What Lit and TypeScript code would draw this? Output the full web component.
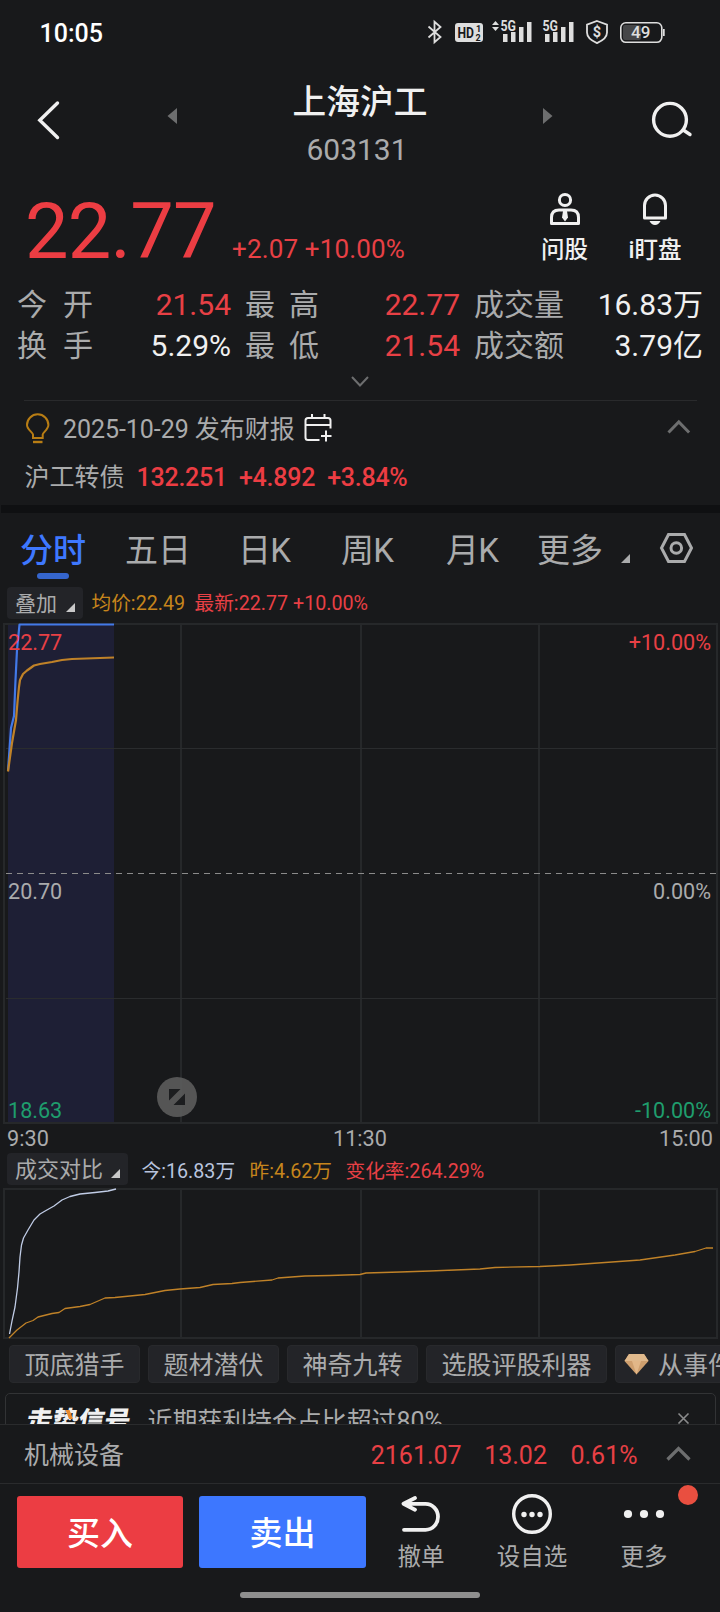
import { LitElement, html, svg, css } from "lit";
import { customElement } from "lit/decorators.js";

const base = css`
  * { box-sizing: border-box; }
  :host {
    display: block;
    font-family: Roboto, "Noto Sans CJK SC", sans-serif;
    color: #aaabac;
    white-space: nowrap;
  }
  svg { display: block; flex: none; overflow: visible; }
  .red { color: #e84045; }
  .green { color: #1f9d6d; }
  .orange { color: #c6851c; }
  .white { color: #f0f0f0; }
  .row { display: flex; align-items: center; }
`;

@customElement("status-bar")
class StatusBar extends LitElement {
  static styles = [base, css`
    .bar { height: 64px; padding: 0 55px 0 39.500px; justify-content: space-between; }
    .time { font-size: 25px; font-weight: 500; color: #fff; line-height: 62px; padding-top: 3px; }
    .g { font: 700 14px Roboto, sans-serif; fill: #dedede; }
    .hd { font: 700 15px Roboto, sans-serif; fill: #18191b; }
    .n { font: 700 9px Roboto, sans-serif; fill: #18191b; }
    .usd { font: 700 14.500px Roboto, sans-serif; fill: #dedede; text-anchor: middle; }
    .bat { font: 500 17px Roboto, sans-serif; fill: #dedede; }
  `];
  bars(x: number) {
    return svg`<path fill="#dedede" d="M${x} 34h4.5v8h-4.5z M${x + 8} 32h4.5v10h-4.5z M${x + 16} 27h4.5v15h-4.5z M${x + 24} 22h4.5v20h-4.5z"/>`;
  }
  render() {
    return html`
      <div class="bar row">
        <span class="time">10:05</span>
        <svg width="241" height="32" viewBox="425 16 241 32">
          <path d="M429.500 26.500l12 10.500-6 5.200V21.800l6 5.200-12 10.500" fill="none" stroke="#dedede" stroke-width="1.800"/>
          <rect x="456" y="23" width="28" height="19" rx="3" fill="#dedede"/>
          <text class="hd" x="458.500" y="38.200" textLength="16.500" lengthAdjust="spacingAndGlyphs">HD</text>
          <text class="n" x="477" y="31.800">1</text>
          <text class="n" x="476.500" y="41">2</text>
          <path fill="#dedede" d="M493 25h7l-3.500-4z M493 27h7l-3.500 4z"/>
          <text class="g" x="501.500" y="31" textLength="15.500" lengthAdjust="spacingAndGlyphs">5G</text>
          ${this.bars(504)}
          <text class="g" x="543.500" y="31" textLength="15.500" lengthAdjust="spacingAndGlyphs">5G</text>
          ${this.bars(546)}
          <path d="M598 21l10 3.600v8c0 5-4 8-10 10.500c-6-2.500-10-5.500-10-10.500v-8z" fill="none" stroke="#dedede" stroke-width="1.800"/>
          <text class="usd" x="598" y="37.300">$</text>
          <rect x="621.800" y="22.800" width="41" height="19.500" rx="5" fill="none" stroke="#dedede" stroke-width="1.600"/>
          <rect x="624" y="25" width="18" height="15" rx="2" fill="#454648"/>
          <rect x="664" y="29" width="1.700" height="7" fill="#dedede"/>
          <text class="bat" x="632" y="38.300">49</text>
        </svg>
      </div>`;
  }
}

@customElement("stock-header")
class StockHeader extends LitElement {
  static styles = [base, css`
    .head { height: 116px; padding: 0 28px 0 37px; display: grid; grid-template-columns: 130px 10px 1fr 108px 41px; align-items: center; }
    .name { display: flex; flex-direction: column; align-items: center; padding-top: 17px; height: 116px; }
    .title { font-size: 33.700px; line-height: 44px; font-weight: 500; color: #f0f0f0; }
    .code { font-size: 30px; line-height: 42px; margin-top: 4px; padding-right: 6px; }
  `];
  render() {
    return html`
      <div class="head">
        <svg width="24" height="40" viewBox="37 102 24 40"><path d="M57.500 103L39.800 120.300L57.500 137.500" fill="none" stroke="#f0f0f0" stroke-width="3.400" stroke-linecap="round"/></svg>
        <svg width="10" height="16" viewBox="167 114 10 16"><path d="M177 108v16l-9.500-8z" fill="#6d6e6f"/></svg>
        <div class="name"><div class="title">上海沪工</div><div class="code">603131</div></div>
        <svg width="10" height="16" viewBox="543 114 10 16"><path d="M543 108v16l9.500-8z" fill="#6d6e6f"/></svg>
        <svg width="41" height="40" viewBox="651 102 41 40"><g fill="none" stroke="#f0f0f0" stroke-width="3.400" stroke-linecap="round"><circle cx="670" cy="119.800" r="16.400"/><path d="M684 130.500l6 4"/></g></svg>
      </div>`;
  }
}

@customElement("quote-panel")
class QuotePanel extends LitElement {
  static styles = [base, css`
    .top { height: 104px; padding: 0 37px 0 25px; display: flex; }
    .price { font-size: 77.500px; line-height: 80px; padding-top: 12px; color: #ec3d43; width: 207px; letter-spacing: -0.800px; }
    .chg { font-size: 26px; line-height: 30px; padding-top: 54px; letter-spacing: 0.150px; }
    .acts { margin-left: auto; display: flex; gap: 34.500px; padding-top: 12px; }
    .act { display: flex; flex-direction: column; align-items: center; font-size: 23.500px; line-height: 28px; font-weight: 500; color: #f0f0f0; width: 56px; }
    .act svg { margin-bottom: 10px; }
    .grid { display: grid; grid-template-columns: 214px 215px 229px; column-gap: 14px; padding-left: 17px; }
    .cell { display: flex; justify-content: space-between; font-size: 30px; line-height: 41px; height: 41px; }
    .lab { display: flex; gap: 16px; }
    .c2 .lab { gap: 14px; }
    .fold { height: 34px; padding-left: 351px; padding-top: 10px; }
  `];
  render() {
    const cells = [
      ["今开", "21.54", "red"], ["最高", "22.77", "red"], ["成交量", "16.83万", "white"],
      ["换手", "5.29%", "white"], ["最低", "21.54", "red"], ["成交额", "3.79亿", "white"],
    ];
    return html`
      <div class="top">
        <div class="price">22.77</div>
        <div class="chg red">+2.07 +10.00%</div>
        <div class="acts">
          <div class="act">
            <svg width="32" height="34" viewBox="549 192 32 34"><g fill="none" stroke="#f0f0f0" stroke-width="3"><circle cx="565" cy="200" r="5.600"/><path d="M551.500 223.500v-6q0-7.500 7.500-7.500h12q7.500 0 7.500 7.500v6z" stroke-linejoin="round"/></g><path d="M563 211h4l1 6.500-3 4-3-4z" fill="#f0f0f0"/></svg>
            <span>问股</span>
          </div>
          <div class="act">
            <svg width="26" height="34" viewBox="642 192 26 34"><path d="M644.500 218v-12.500a10.500 10.500 0 0 1 21 0v12.500z" fill="none" stroke="#f0f0f0" stroke-width="3" stroke-linejoin="round"/><path d="M649.500 221h11q-2 4-5.500 4t-5.500-4z" fill="#f0f0f0"/></svg>
            <span>i盯盘</span>
          </div>
        </div>
      </div>
      <div class="grid">
        ${cells.map(([l, v, c], i) => html`
          <div class="cell c${(i % 3) + 1}">
            ${l.length === 2 ? html`<span class="lab"><span>${l[0]}</span><span>${l[1]}</span></span>` : html`<span>${l}</span>`}
            <span class=${c}>${v}</span>
          </div>`)}
      </div>
      <div class="fold"><svg width="18" height="12" viewBox="351 376 18 12"><path d="M352 377l8 8.500 8-8.500" fill="none" stroke="#6d6e6f" stroke-width="2"/></svg></div>`;
  }
}

@customElement("news-strip")
class NewsStrip extends LitElement {
  static styles = [base, css`
    .wrap { margin: 0 23px 0 24px; border-top: 1px solid #292a2c; height: 105px; font-size: 25px; padding: 5px 6px 0 1px; }
    .line { height: 48px; line-height: 48px; }
    .date { margin-left: 14px; letter-spacing: -0.050px; }
    .cal { margin-left: 9.500px; }
    .up { margin-left: auto; }
    .bond { gap: 12px; }
    .bond b { font-weight: 500; color: #ec3d43; font-size: 25px; letter-spacing: -0.250px; }
    .bond span { margin-left: -0.500px; }
    .band { height: 8px; margin-left: 1px; background: #0f1012; }
  `];
  render() {
    return html`
      <div class="wrap">
        <div class="line row">
          <svg width="24" height="32" viewBox="25 413 24 32"><g fill="none" stroke="#b87d14" stroke-width="2"><path d="M33 437v-3.500c0-2-6-5-6-9.500a10.700 10.700 0 0 1 21.400 0c0 4.500-5.700 7.500-5.700 9.500v3.500z"/><path d="M33 441h9.500" stroke-width="2.400"/></g></svg>
          <span class="date">2025-10-29 发布财报</span>
          <svg class="cal" width="28" height="30" viewBox="304.500 415 28 30"><g fill="none" stroke="#f0f0f0" stroke-width="2"><path d="M331 428.500v-8q0-2.500-2.500-2.500h-20q-2.500 0-2.500 2.500v17q0 2.500 2.500 2.500h11.500M306 425h25M312.500 414v5M325 414v5M321.500 436h10.500M326.500 430.500v11"/></g></svg>
          <svg class="up" width="24" height="16" viewBox="668 422 24 16"><path d="M669.500 432.500l10.300-10.500 10.300 10.500" fill="none" stroke="#6d6e6f" stroke-width="3"/></svg>
        </div>
        <div class="line row bond"><span>沪工转债</span><b>132.251</b><b>+4.892</b><b>+3.84%</b></div>
      </div>
      <div class="band"></div>`;
  }
}

@customElement("period-tabs")
class PeriodTabs extends LitElement {
  static styles = [base, css`
    .tabs { height: 71px; display: grid; grid-template-columns: 105px 113px 103px 105px 91px 102px 1fr; padding-left: 20px; font-size: 33px; line-height: 75px; }
    .on { color: #3e78ff; font-weight: 500; position: relative; }
    .on::after { content: ""; position: absolute; left: 17px; top: 60px; width: 32px; height: 6px; border-radius: 3px; background: #3565cc; }
    .k { letter-spacing: -0.800px; }
    .more { display: flex; align-items: center; }
    .more svg { margin: 16px 0 0 18px; }
    .set { padding-top: 18px; padding-left: 20px; }
  `];
  render() {
    return html`
      <div class="tabs">
        <span class="on">分时</span><span>五日</span><span class="k">日K</span><span class="k">周K</span><span class="k">月K</span>
        <span class="more">更多<svg width="9" height="9" viewBox="0 0 9 9"><path d="M9 0v9H0z" fill="#aaabac"/></svg></span>
        <span class="set"><svg width="34" height="34" viewBox="660 531 34 34"><g fill="none" stroke="#aaabac" stroke-width="3"><path d="M669.500 534.500h16l7 13.500-7 13.500h-16l-7-13.500z"/><circle cx="677.300" cy="548" r="5.300"/></g></svg></span>
      </div>`;
  }
}

const corner = html`<svg width="9" height="9" viewBox="0 0 9 9"><path d="M9 0v9H0z" fill="#c8c8c8"/></svg>`;

@customElement("chart-area")
class ChartArea extends LitElement {
  static styles = [base, css`
    .legend { display: flex; height: 32px; margin: 3px 0 4px 7px; font-size: 19.700px; line-height: 32px; }
    .legend > span { padding-top: 1px; }
    .legend.vol { margin: 0 0 3px 7px; }
    .legend.vol > span { padding-top: 3px; }
    .pick { display: flex; align-items: center; justify-content: space-between; width: 76px; padding: 2px 8px 0 8px; font-size: 21px; background: #232428; border-radius: 4px; }
    .pick.wide { width: 121px; font-size: 22px; }
    .pick svg { margin-top: 6px; }
    .avg { margin-left: 8.500px; width: 103px; }
    .today { margin-left: 13.500px; width: 108px; color: #b9c4de; }
    .yest { width: 96px; }
    .plot { display: grid; }
    .plot > * { grid-area: 1 / 1; }
    .labels { display: grid; grid-template-columns: 1fr 1fr; font-size: 21.600px; line-height: 26px; padding: 7px 9px 0 8px; grid-template-rows: 249px 219px 25px; }
    .labels span:nth-child(even) { text-align: right; }
    .axis { display: grid; grid-template-columns: 1fr 1fr 1fr; height: 29px; line-height: 30px; font-size: 21.700px; padding: 0 7px 0 7px; }
    .mid { text-align: center; }
    .end { text-align: right; }
  `];
  render() {
    return html`
      <div class="legend">
        <div class="pick">叠加${corner}</div>
        <span class="avg orange">均价:22.49</span><span class="red">最新:22.77 +10.00%</span>
      </div>
      <div class="plot">
        <svg width="720" height="501" viewBox="0 623 720 501">
          <g fill="none" stroke="#26282a" stroke-width="2"><rect x="4" y="624" width="713" height="499"/><path d="M181 624v499M361 624v499M539 624v499"/></g>
          <path d="M8 625h106v497H8z" fill="#2a2a66" fill-opacity=".35"/>
          <path d="M6 748.500h710M6 998.500h710" stroke="#2a2c2e"/>
          <path d="M6 873.500h710" stroke="#8b8b8b" stroke-dasharray="6 5"/>
          <g fill="none" stroke-width="2.200" stroke-linejoin="round">
            <path d="M8 771L11 728L14 716L15.500 680L17 650L19.500 624.500H114" stroke="#4279e8"/>
            <path d="M8 771.500L12 743L16 720L17.500 702L19 687L20 680L23 674L27 670.500L34 665.500L40 664L52 662L62 660L72 659L114 657.500" stroke="#c08228"/>
          </g>
          <circle cx="177" cy="1097" r="20" fill="#5c5c5c" fill-opacity=".9"/>
          <path d="M169 1089h11.500L169 1100.500zM185 1093.500V1105H173.500z" fill="#1c1d1f"/>
        </svg>
        <div class="labels">
          <span class="red">22.77</span><span class="red">+10.00%</span>
          <span>20.70</span><span>0.00%</span>
          <span class="green">18.63</span><span class="green">-10.00%</span>
        </div>
      </div>
      <div class="axis"><span>9:30</span><span class="mid">11:30</span><span class="end">15:00</span></div>
      <div class="legend vol">
        <div class="pick wide">成交对比${corner}</div>
        <span class="today">今:16.83万</span><span class="yest orange">昨:4.62万</span><span class="red">变化率:264.29%</span>
      </div>
      <svg width="720" height="151" viewBox="0 1188 720 151">
        <g fill="none" stroke="#26282a" stroke-width="2"><rect x="4" y="1189" width="713" height="149"/><path d="M181 1189v149M361 1189v149M539 1189v149"/></g>
        <g fill="none" stroke-width="1.300" stroke-linejoin="round">
          <path d="M9.500 1334L12 1321L15 1307L17.500 1288L19 1272L20 1257L21.500 1245L23.500 1238L28 1230L34 1220L40 1214L46 1210.500L54 1206L62 1200L70 1196.500L80 1194L95 1192.500L108 1191L116 1189" stroke="#c0cce6"/>
          <path d="M9 1338L17 1330L26 1323L33 1320.500L38 1317L52 1313.500L59 1312.500L65 1308.500L80 1306.500L90 1304.500L105 1298L115 1297.500L145 1294.500L165 1290.500L180 1289L200 1287.500L213 1284.500L232 1283.500L240 1282.500L272 1280L278 1278L305 1276L330 1275.500L360 1274.500L366 1273L400 1272L430 1271L480 1269L495 1267.500L540 1266.500L570 1265L640 1260L675 1255L695 1251.500L706 1248H713" stroke="#c08228"/>
        </g>
      </svg>`;
  }
}

@customElement("signal-strip")
class SignalStrip extends LitElement {
  static styles = [base, css`
    .chips { display: flex; gap: 8px; padding: 6px 0 10px 9px; overflow: hidden; font-size: 25px; line-height: 36px; }
    .chip { flex: none; display: flex; align-items: center; height: 38px; padding: 4px 0 0; background: #232428; border: 1px solid #28292c; border-radius: 4px; width: 131px; justify-content: center; }
    .chip.long { width: 181px; }
    .chip.gem { width: 150px; padding-left: 9px; gap: 9px; justify-content: flex-start; }
    .chip.gem svg { margin-top: -5px; }
    .clip { height: 31px; overflow: hidden; }
    .card { margin: 0 4px 0 5px; height: 60px; border: 1px solid #323335; border-radius: 5px; display: flex; align-items: center; padding: 0 26px 2px 21px; font-size: 24.900px; line-height: 56px; }
    .logo { position: relative; font-family: "Noto Sans CJK SC", sans-serif; font-size: 26px; font-weight: 900; color: #f0f0f0; width: 120.500px; transform: skewX(-10deg); top: -3px; }
    .logo svg { position: absolute; left: 37px; top: 19px; }
    .x { margin: -7px 0 0 auto; }
  `];
  render() {
    return html`
      <div class="chips">
        <div class="chip">顶底猎手</div><div class="chip">题材潜伏</div><div class="chip">神奇九转</div>
        <div class="chip long">选股评股利器</div>
        <div class="chip gem"><svg width="24" height="26" viewBox="625 1350 24 26"><path d="M629 1353h15l4.500 7-12 13.500-12-13.500z" fill="#cf9f6e"/><path d="M629 1353h15l4.500 7h-24z" fill="#e0b98c"/><path d="M632 1360h9l-4.500 13.500z" fill="#e2b788"/></svg>从事件</div>
      </div>
      <div class="clip">
        <div class="card">
          <span class="logo">走势信号<svg width="9" height="9" viewBox="0 0 9 9"><path d="M0 0h4l5 9H5z" fill="#e8892b"/></svg></span>
          <span>近期获利持仓占比超过80%</span>
          <svg class="x" width="11" height="11" viewBox="0 0 11 11"><path d="M.500 .500l10 10M10.500 .500l-10 10" stroke="#8a8b8c" stroke-width="1.600"/></svg>
        </div>
      </div>`;
  }
}

@customElement("trade-bar")
class TradeBar extends LitElement {
  static styles = [base, css`
    .index { height: 59px; border-top: 1px solid #2a2b2d; font-size: 25px; line-height: 56px; padding: 4px 29px 0 24px; }
    .v1 { margin-left: auto; }
    .v2 { margin-left: 22.500px; }
    .v3 { margin-left: 23.500px; }
    .index svg { margin: -5px 0 0 28.500px; }
    .acts { border-top: 1px solid #2a2b2d; display: flex; height: 109px; padding: 12px 0 0 17px; }
    .btn { height: 72px; width: 166px; border-radius: 3px; color: #fff; font-size: 33px; font-weight: 500; line-height: 76px; text-align: center; background: #ec3d43; }
    .btn.sell { width: 167px; margin-left: 16px; background: #3d77ff; }
    .item { display: flex; flex-direction: column; align-items: center; font-size: 23.500px; line-height: 30px; width: 76px; position: relative; }
    .item svg { margin: -2px 0 8px; }
    .undo { margin-left: 17px; }
    .fav { margin-left: 35px; }
    .more { margin-left: 36px; }
    .dot { position: absolute; left: 72px; top: -11px; width: 20px; height: 20px; border-radius: 50%; background: #e94f40; }
    .home { width: 240px; height: 6px; border-radius: 3px; background: #8f8f8f; margin: 0 auto; }
  `];
  render() {
    return html`
      <div class="index row">
        <span>机械设备</span><span class="v1 red">2161.07</span><span class="v2 red">13.02</span><span class="v3 red">0.61%</span>
        <svg width="25" height="16" viewBox="666.500 1445 25 16"><path d="M668 1458.500l11-11 11 11" fill="none" stroke="#6d6e6f" stroke-width="3.200"/></svg>
      </div>
      <div class="acts">
        <div class="btn">买入</div>
        <div class="btn sell">卖出</div>
        <div class="item undo">
          <svg width="40" height="40" viewBox="402 1494 40 40"><path d="M416 1498l-11.500 5.700 11.500 6M405 1503.800h21.500a12.500 13 0 0 1 0 26h-21.500" fill="none" stroke="#f0f0f0" stroke-width="3.800" stroke-linecap="round" stroke-linejoin="round"/></svg>
          撤单
        </div>
        <div class="item fav">
          <svg width="40" height="40" viewBox="512 1494 40 40"><circle cx="532" cy="1514" r="18.300" fill="none" stroke="#f0f0f0" stroke-width="3.400"/><g fill="#f0f0f0"><circle cx="524" cy="1514.500" r="2.700"/><circle cx="532" cy="1514.500" r="2.700"/><circle cx="540" cy="1514.500" r="2.700"/></g></svg>
          设自选
        </div>
        <div class="item more">
          <svg width="40" height="40" viewBox="624 1494 40 40"><g fill="#f0f0f0"><circle cx="628" cy="1514" r="4.100"/><circle cx="644" cy="1514" r="4.100"/><circle cx="660" cy="1514" r="4.100"/></g></svg>
          更多<i class="dot"></i>
        </div>
      </div>
      <div class="home"></div>`;
  }
}

@customElement("app-root")
class AppRoot extends LitElement {
  static styles = css`
    :host { display: block; width: 720px; height: 1612px; overflow: hidden; background: #18191b; }
  `;
  render() {
    return html`
      <status-bar></status-bar>
      <stock-header></stock-header>
      <quote-panel></quote-panel>
      <news-strip></news-strip>
      <period-tabs></period-tabs>
      <chart-area></chart-area>
      <signal-strip></signal-strip>
      <trade-bar></trade-bar>`;
  }
}
